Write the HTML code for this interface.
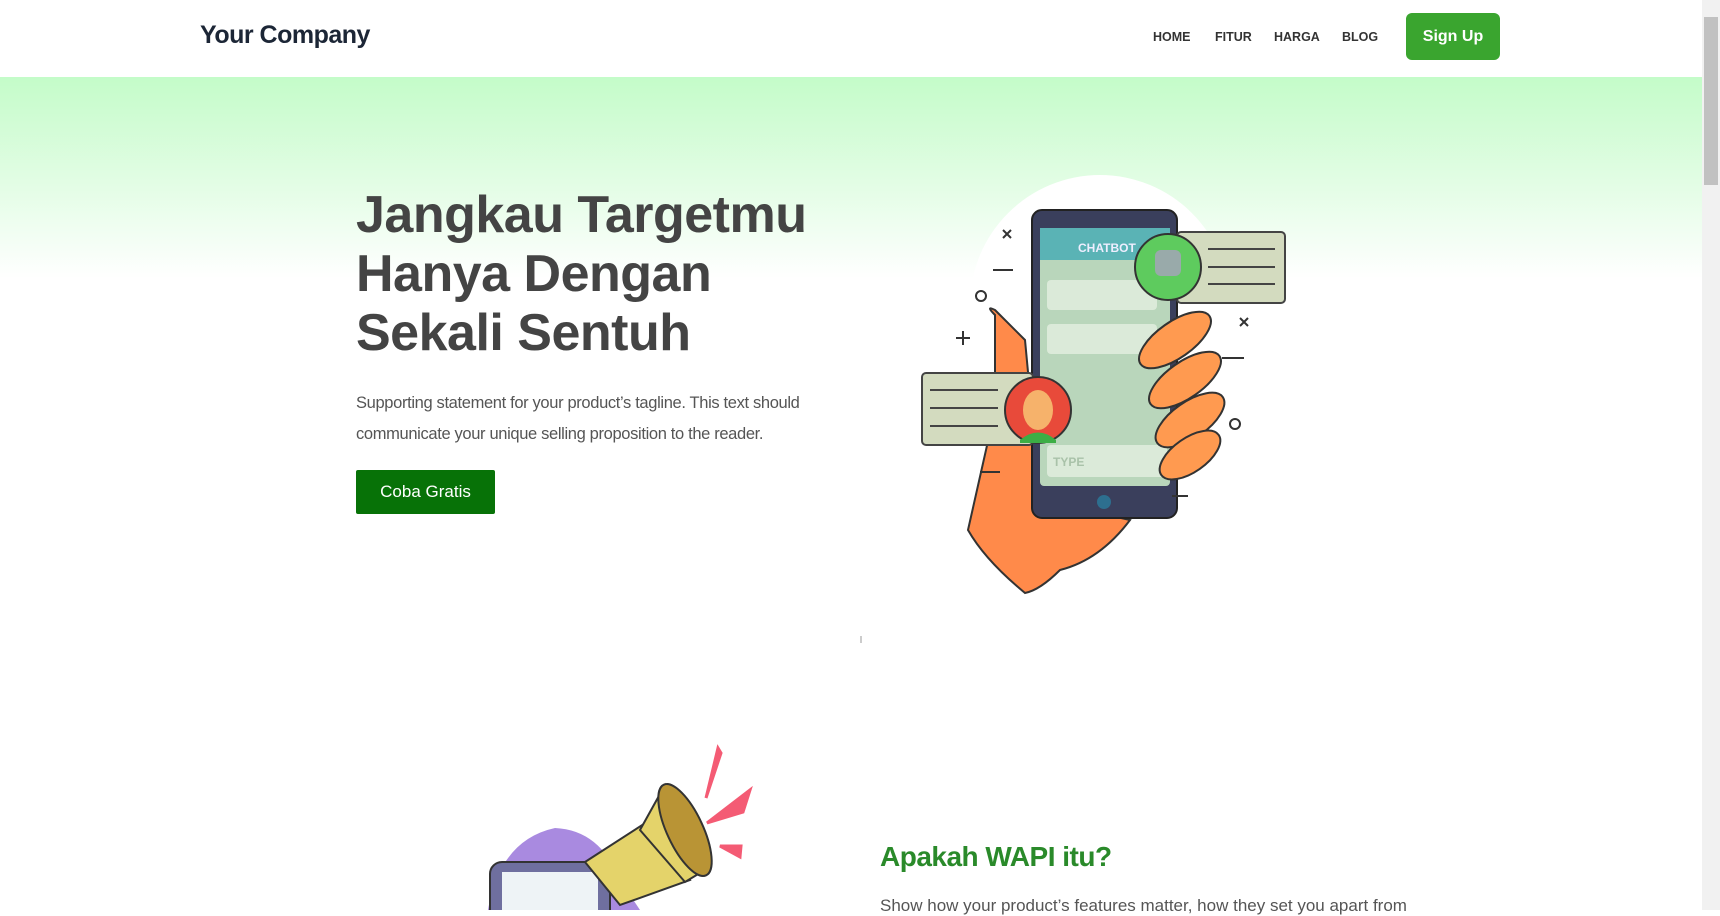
<!DOCTYPE html>
<html><head><meta charset="utf-8">
<style>
*{margin:0;padding:0;box-sizing:border-box}
html,body{width:1720px;height:910px;overflow:hidden;background:#fff;font-family:"Liberation Sans",sans-serif}
.nav{position:absolute;left:0;top:0;width:1702px;height:77px;background:#fff}
.logo{position:absolute;left:200px;top:21px;font-size:25px;font-weight:bold;color:#1c2636;letter-spacing:-0.5px}
.links a{position:absolute;top:30px;font-size:12.5px;font-weight:bold;color:#333;text-decoration:none}
.signup{position:absolute;left:1406px;top:13px;width:94px;height:47px;background:#3aa52f;border-radius:6px;color:#fff;font-size:16px;font-weight:bold;text-align:center;line-height:47px}
.hero{position:absolute;left:0;top:77px;width:1702px;height:560px;background:linear-gradient(#c4fcc9 0%,#e4fde6 20%,#fff 36%)}
h1{position:absolute;left:356px;top:186px;font-size:52px;line-height:59px;color:#444;font-weight:bold;letter-spacing:-0.5px}
.sub{position:absolute;left:356px;top:388px;width:500px;font-size:16.5px;line-height:31px;color:#555;letter-spacing:-0.35px}
.btn{position:absolute;left:356px;top:470px;width:139px;height:44px;background:#077207;color:#fff;font-size:17px;text-align:center;line-height:44px;border-radius:2px}
.scroll{position:absolute;left:1702px;top:0;width:18px;height:910px;background:#f1f1f1}
.thumb{position:absolute;left:1704px;top:17px;width:14px;height:168px;background:#c1c1c1}
h2{position:absolute;left:880px;top:841px;font-size:28px;color:#2a8a2a;font-weight:bold;letter-spacing:-0.5px}
.p2{position:absolute;left:880px;top:896px;font-size:17px;color:#555;white-space:nowrap}
</style></head><body>
<div class="hero"></div>
<div class="nav">
<div class="logo">Your Company</div>
<div class="links"><a style="left:1153px">HOME</a><a style="left:1215px">FITUR</a><a style="left:1274px">HARGA</a><a style="left:1342px">BLOG</a></div>
<div class="signup">Sign Up</div>
</div>
<h1>Jangkau Targetmu<br>Hanya Dengan<br>Sekali Sentuh</h1>
<div class="sub">Supporting statement for your product’s tagline. This text should<br>communicate your unique selling proposition to the reader.</div>
<div class="btn">Coba Gratis</div>
<svg style="position:absolute;left:0;top:0" width="1702" height="910">
<circle cx="1100" cy="305" r="130" fill="#fff"/>
<path d="M995 315 Q985 305 995 310 L1025 340 L1040 500 L1130 520 Q1100 560 1060 570 Q1040 590 1025 593 Q985 560 968 530 L995 410 Z" fill="#ff8a4a" stroke="#333" stroke-width="2"/>
<rect x="1032" y="210" width="145" height="308" rx="10" fill="#3a3f5c" stroke="#222" stroke-width="2"/>
<rect x="1040" y="228" width="130" height="258" rx="4" fill="#b9d6bb"/>
<rect x="1040" y="228" width="130" height="32" fill="#5ab3b5"/>
<text x="1078" y="252" font-size="12" font-weight="bold" fill="#eef" font-family="Liberation Sans">CHATBOT</text>
<rect x="1047" y="280" width="110" height="30" rx="4" fill="#dbead9"/>
<rect x="1047" y="324" width="110" height="30" rx="4" fill="#dbead9"/>
<rect x="1047" y="445" width="120" height="32" rx="4" fill="#dbead9"/>
<text x="1053" y="466" font-size="12" font-weight="bold" fill="#a9c2a9" font-family="Liberation Sans">TYPE</text>
<circle cx="1104" cy="502" r="7" fill="#2d6f8f"/>
<g fill="#ff9a50" stroke="#333" stroke-width="2">
<ellipse cx="1175" cy="340" rx="42" ry="18" transform="rotate(-35 1175 340)"/>
<ellipse cx="1185" cy="380" rx="42" ry="18" transform="rotate(-35 1185 380)"/>
<ellipse cx="1190" cy="420" rx="40" ry="18" transform="rotate(-35 1190 420)"/>
<ellipse cx="1190" cy="455" rx="35" ry="17" transform="rotate(-35 1190 455)"/>
</g>
<rect x="1177" y="232" width="108" height="71" rx="4" fill="#d3dbbf" stroke="#444" stroke-width="2"/>
<g stroke="#444" stroke-width="2"><line x1="1208" y1="249" x2="1275" y2="249"/><line x1="1208" y1="267" x2="1275" y2="267"/><line x1="1208" y1="284" x2="1275" y2="284"/></g>
<circle cx="1168" cy="267" r="33" fill="#5ecb5e" stroke="#333" stroke-width="2"/>
<rect x="1155" y="250" width="26" height="26" rx="6" fill="#9aa"/>
<rect x="922" y="373" width="111" height="72" rx="4" fill="#d3dbbf" stroke="#444" stroke-width="2"/>
<g stroke="#444" stroke-width="2"><line x1="930" y1="390" x2="998" y2="390"/><line x1="930" y1="408" x2="998" y2="408"/><line x1="930" y1="426" x2="998" y2="426"/></g>
<circle cx="1038" cy="410" r="33" fill="#e84a3a" stroke="#333" stroke-width="2"/>
<ellipse cx="1038" cy="410" rx="15" ry="20" fill="#f6b26b"/>
<path d="M1020 440 Q1038 425 1056 440 L1056 443 L1020 443Z" fill="#3cae45"/>
<g stroke="#333" stroke-width="2" fill="none">
<path d="M1003 230l8 8M1011 230l-8 8M1240 318l8 8M1248 318l-8 8M956 338h14M963 331v14M993 270h20M1222 358h22M980 472h20M1172 496h16"/>
<circle cx="981" cy="296" r="5"/><circle cx="1235" cy="424" r="5"/>
</g>
<line x1="861" y1="636" x2="861" y2="643" stroke="#999"/>
<path d="M488 910 Q500 840 555 828 Q600 830 620 880 L640 910Z" fill="#a98ae0"/>
<rect x="490" y="862" width="120" height="80" rx="12" fill="#6f6f9f" stroke="#333" stroke-width="2"/>
<rect x="502" y="872" width="96" height="60" fill="#eef3f6"/>
<path d="M585 862 L650 820 L690 880 L620 905Z" fill="#e4d36a" stroke="#333" stroke-width="2"/>
<path d="M640 830 L665 785 L705 870 L685 882Z" fill="#e4d36a" stroke="#333" stroke-width="2"/>
<ellipse cx="685" cy="830" rx="18" ry="50" transform="rotate(-25 685 830)" fill="#b99435" stroke="#333" stroke-width="2"/>
<path d="M718 748 L706 798 L721 753Z M750 790 L707 823 L743 812Z M720 846 L740 857 L741 846Z" fill="#f45b74" stroke="#f45b74" stroke-width="3"/>
</svg>
<h2>Apakah WAPI itu?</h2>
<div class="p2">Show how your product’s features matter, how they set you apart from</div>
<div class="scroll"></div><div class="thumb"></div>
</body></html>
